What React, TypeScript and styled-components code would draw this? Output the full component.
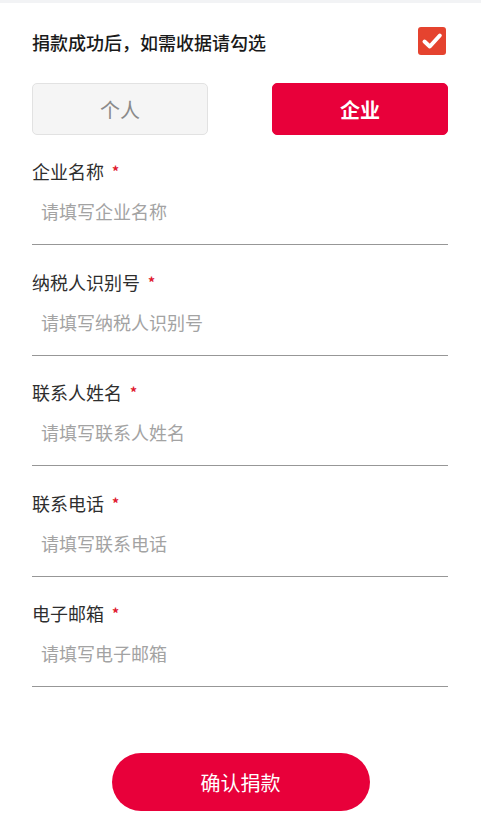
import React, { useState } from "react";
import styled, { createGlobalStyle } from "styled-components";

const Global = createGlobalStyle`
  html, body { margin: 0; padding: 0; background: #ffffff; }
  body { font-family: "Noto Sans CJK SC", "Noto Sans", sans-serif; }
  * { box-sizing: border-box; }
`;

const Page = styled.div`
  border-top: 3px solid #f2f3f5;
  padding: 24px 33px 0 32px;
  display: flex;
  flex-direction: column;
`;

const HeaderRow = styled.div`
  display: flex;
  align-items: center;
  justify-content: space-between;
  height: 28px;
`;

const HeaderText = styled.span`
  font-size: 18px;
  font-weight: 500;
  color: #1a1a1a;
  line-height: 28px;
  margin-top: 2px;
`;

const Check = styled.button`
  width: 28px;
  height: 28px;
  margin-right: 2px;
  border: none;
  border-radius: 3px;
  background: #e5432f;
  padding: 0;
  display: flex;
  align-items: center;
  justify-content: center;
  cursor: pointer;
`;

const Tabs = styled.div`
  display: flex;
  justify-content: space-between;
  margin-top: 28px;
`;

const Tab = styled.button<{ $active: boolean }>`
  width: 176px;
  height: 52px;
  border-radius: 5px;
  border: 1px solid ${(p) => (p.$active ? "#e8003a" : "#e2e2e2")};
  background: ${(p) => (p.$active ? "#e8003a" : "#f5f5f5")};
  color: ${(p) => (p.$active ? "#ffffff" : "#8a8a8a")};
  font-family: inherit;
  font-size: 20px;
  font-weight: ${(p) => (p.$active ? 700 : 400)};
  padding: 0;
  cursor: pointer;
`;

const Fields = styled.div`
  display: flex;
  flex-direction: column;
  gap: 24.5px;
  margin-top: 24px;
`;

const Field = styled.label`
  display: flex;
  flex-direction: column;
`;

const Label = styled.div`
  font-size: 18px;
  line-height: 24px;
  color: #2e2e2e;
  font-weight: 400;
  display: flex;
  align-items: center;
`;

const Star = styled.span`
  color: #e0192f;
  font-size: 14px;
  margin-left: 8px;
  font-weight: 700;
`;

const Input = styled.input`
  border: none;
  border-bottom: 1px solid #979797;
  outline: none;
  padding: 16px 0 21px 9px;
  height: 62px;
  font-family: inherit;
  font-size: 18px;
  line-height: 24px;
  color: #333;
  background: transparent;
  &::placeholder {
    color: #a3a3a3;
  }
`;

const Submit = styled.button`
  align-self: center;
  margin: 66px 0 0 1px;
  width: 258px;
  height: 58px;
  border-radius: 29px;
  border: none;
  background: #e8003a;
  color: #ffffff;
  font-family: inherit;
  font-size: 20px;
  cursor: pointer;
`;

const fields = [
  { label: "企业名称", ph: "请填写企业名称" },
  { label: "纳税人识别号", ph: "请填写纳税人识别号" },
  { label: "联系人姓名", ph: "请填写联系人姓名" },
  { label: "联系电话", ph: "请填写联系电话" },
  { label: "电子邮箱", ph: "请填写电子邮箱" },
];

export default function App() {
  const [type, setType] = useState<"p" | "c">("c");
  const [checked, setChecked] = useState(true);
  return (
    <>
      <Global />
      <Page>
        <HeaderRow>
          <HeaderText>捐款成功后，如需收据请勾选</HeaderText>
          <Check onClick={() => setChecked(!checked)} aria-label="check">
            {checked && (
              <svg width="24" height="24" viewBox="0 0 24 24">
                <path d="M4.5 12.5 L9.8 17.5 L19.8 6.5" fill="none" stroke="#ffffff" strokeWidth="4" strokeLinecap="round" strokeLinejoin="round" />
              </svg>
            )}
          </Check>
        </HeaderRow>
        <Tabs>
          <Tab $active={type === "p"} onClick={() => setType("p")}>个人</Tab>
          <Tab $active={type === "c"} onClick={() => setType("c")}>企业</Tab>
        </Tabs>
        <Fields>
          {fields.map((f) => (
            <Field key={f.label}>
              <Label>
                {f.label}
                <Star>*</Star>
              </Label>
              <Input placeholder={f.ph} />
            </Field>
          ))}
        </Fields>
        <Submit>确认捐款</Submit>
      </Page>
    </>
  );
}
